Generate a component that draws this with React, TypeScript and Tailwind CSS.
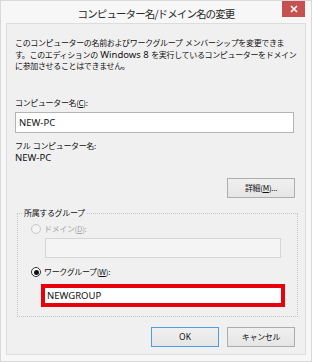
import React from 'react';

const font = "font-['Noto_Sans_CJK_JP','Noto_Sans',sans-serif]";

function Mn({ children }: { children: React.ReactNode }) {
  return <span className="underline underline-offset-1">{children}</span>;
}

// latin text is set a little larger than the kana, like Meiryo UI
function L({ children, size = 'text-[9.5px]' }: { children: React.ReactNode; size?: string }) {
  return <span className={`font-['Noto_Sans',sans-serif] tracking-normal ${size}`}>{children}</span>;
}

function Button({ label, primary }: { label: React.ReactNode; primary?: boolean }) {
  return (
    <button
      className={`w-[68px] h-[20px] flex items-center justify-center text-[8px] tracking-[-0.3px] text-[#111] bg-gradient-to-b from-[#f0f0f0] to-[#e5e5e5] border ${
        primary ? 'border-[#4e9de6]' : 'border-[#adadad]'
      }`}
    >
      {label}
    </button>
  );
}

function Radio({ checked, disabled }: { checked?: boolean; disabled?: boolean }) {
  return (
    <span
      className={`w-[10px] h-[10px] rounded-full border flex items-center justify-center ${
        disabled ? 'border-[#c8c8c8] bg-[#f4f4f4]' : 'border-[#333] bg-white'
      }`}
    >
      {checked && <span className="w-[5px] h-[5px] rounded-full bg-[#111]" />}
    </span>
  );
}

export default function App() {
  return (
    <div className={`w-[312px] h-[362px] bg-[#f7f7f7] border border-[#d9d9d9] flex flex-col ${font}`}>
      {/* title bar */}
      <div className="relative h-[22px] shrink-0 flex items-center justify-center">
        <span className="text-[10.5px] tracking-[-0.9px] text-[#2a2a2a] pt-[3px]">
          コンピューター名/ドメイン名の変更
        </span>
        <div className="absolute right-[6px] top-0 w-[23px] h-[16px] bg-[#c75050] flex items-center justify-center">
          <svg width="8" height="8" viewBox="0 0 8 8">
            <path d="M1 1 L7 7 M7 1 L1 7" stroke="#fff" strokeWidth="1.6" />
          </svg>
        </div>
      </div>

      {/* content */}
      <div className="mx-[5px] h-[332px] bg-[#f0f0f0] border border-[#dcdcdc] flex flex-col px-[8px] text-[8px] tracking-[-0.35px] text-[#111] leading-[11.7px]">
        <p className="pt-[13px]">
          このコンピューターの名前およびワークグループ<L> </L>メンバーシップを変更できま
          <br />
          す。このエディションの<L> Windows 8 </L>を実行しているコンピューターをドメイン
          <br />
          に参加させることはできません。
        </p>

        <div className="mt-[25px] leading-[12px]">
          コンピューター名(<Mn>C</Mn>):
        </div>
        <div className="mt-[3px] w-[279px] h-[21px] bg-white border border-[#b4b4b4] flex items-center px-[3px] leading-none">
          <L>NEW-PC</L>
        </div>

        <div className="mt-[7px] leading-[12px]">
          フル<L> </L>コンピューター名:
        </div>
        <div className="leading-[12px]">
          <L>NEW-PC</L>
        </div>

        <div className="mt-[14px] flex justify-end pr-[2px]">
          <Button
            label={
              <>
                詳細(<Mn>M</Mn>)...
              </>
            }
          />
        </div>

        <fieldset className="mt-[9px] ml-[2px] w-[278px] border border-dotted border-[#c4c4c4] px-[12px] pb-[9px]">
          <legend className="ml-[-7px] px-[1px] leading-[12px]">所属するグループ</legend>
          <div className="mt-[4px] flex items-center gap-[3px] ml-[1px] leading-[12px] text-[#a6a6a6]">
            <Radio disabled />
            <span>
              ドメイン(<Mn>D</Mn>):
            </span>
          </div>
          <div className="mt-[3px] ml-[15px] w-[236px] h-[20px] bg-[#f4f4f4] border border-[#d5d5d5]" />

          <div className="mt-[8px] flex items-center gap-[3px] ml-[1px] leading-[12px]">
            <Radio checked />
            <span>
              ワークグループ(<Mn>W</Mn>):
            </span>
          </div>
          <div className="mt-[6px] ml-[11px] w-[244px] h-[23px] border-[4px] border-[#e8000b] bg-white flex items-center px-[2px] leading-none">
            <L>NEWGROUP</L>
          </div>
        </fieldset>

        <div className="mt-[10px] flex justify-end gap-[8px] pr-[2px]">
          <Button label={<L size="text-[8.5px]">OK</L>} primary />
          <Button label="キャンセル" />
        </div>
      </div>
    </div>
  );
}
